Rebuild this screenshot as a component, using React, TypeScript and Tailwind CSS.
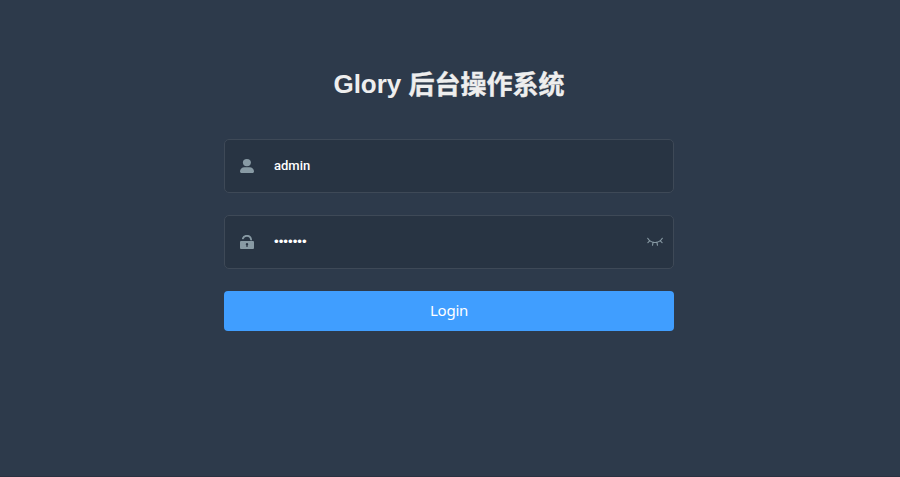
import React from 'react';

function UserIcon() {
  return (
    <svg viewBox="0 0 14 14" className="h-3.5 w-3.5" fill="currentColor">
      <ellipse cx="6.9" cy="3.6" rx="4" ry="3.600" />
      <path d="M0 12.200C0 9.900 2 8.200 4.400 8.200h5.200C12 8.200 14 9.900 14 12.200c0 1.100-.6 1.800-1.700 1.800H1.700C.6 14 0 13.300 0 12.200Z" />
    </svg>
  );
}

function LockIcon() {
  return (
    <svg viewBox="0 0 14 14" className="h-3.5 w-3.5" fill="currentColor">
      <path d="M2.900 3.400C3.500 1.600 5 .8 6.900.8c2.300 0 3.900 1.400 4.200 3.900" fill="none" stroke="currentColor" strokeWidth="1.800" strokeLinecap="round" />
      <path
        fillRule="evenodd"
        d="M1.300 6h11.400c.8 0 1.300.5 1.300 1.300v5.400c0 .8-.5 1.300-1.300 1.300H1.300C.5 14 0 13.500 0 12.700V7.300C0 6.500.5 6 1.300 6ZM7 8.100a1.300 1.300 0 0 0-.6 2.400v1.400h1.200v-1.400A1.300 1.300 0 0 0 7 8.100Z"
      />
    </svg>
  );
}

function ClosedEyeIcon() {
  return (
    <svg viewBox="0 0 16 10" className="h-2.5 w-4" fill="none" stroke="currentColor" strokeWidth="1.100" strokeLinecap="round">
      <path d="M.7 1.300C2.400 4.100 4.900 5.500 8 5.500s5.600-1.400 7.300-4.200M2.700 3.800 .9 5.600M6.100 5.400 5.500 8.300M9.900 5.400l.6 2.900M13.300 3.800l1.800 1.800" />
    </svg>
  );
}

export default function App() {
  return (
    <main className="flex h-[477px] w-[900px] flex-col overflow-hidden border-b border-[#2a3141] bg-[#2d3a4b] font-['Liberation_Sans','Noto_Sans_CJK_SC',sans-serif]">
      <form className="ml-[224px] mt-[64px] flex w-[450px] flex-col">
        <h1 className="mb-[35px] h-10 text-center text-[26px] font-bold leading-10 text-[#eeeeee]">
          Glory <span className="inline-block translate-y-px [-webkit-text-stroke:0.4px_#eeeeee]">后台操作系统</span>
        </h1>
        <div className="mb-[22px] flex h-[54px] items-center rounded-[5px] border border-[#3e4957] bg-[#283443] pl-[15px] text-[#889aa4]">
          <UserIcon />
          <span className="ml-5 font-['Roboto',sans-serif] text-[13px] font-medium leading-5 text-white">admin</span>
        </div>
        <div className="mb-[22px] flex h-[54px] items-center rounded-[5px] border border-[#3e4957] bg-[#283443] pl-[15px] pr-2.5 text-[#889aa4]">
          <LockIcon />
          <span className="ml-5 text-[13.333px] leading-5 text-white">•••••••</span>
          <span className="ml-auto">
            <ClosedEyeIcon />
          </span>
        </div>
        <button type="button" className="h-10 rounded-[4px] bg-[#409eff] pb-0.5 font-['Noto_Sans',sans-serif] text-[15px] leading-[38px] tracking-[-0.250px] text-white">
          Login
        </button>
      </form>
    </main>
  );
}
